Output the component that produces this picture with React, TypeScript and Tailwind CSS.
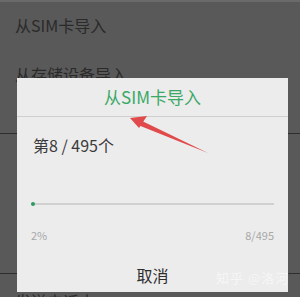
import React from "react";

export default function App() {
  const font = { fontFamily: '"Noto Sans CJK SC", "Noto Sans", Roboto, sans-serif' };
  return (
    <div className="relative w-[300px] h-[297px] overflow-hidden bg-[#595959]" style={font}>
      <div className="h-[2px] bg-[#6a6a6a]" />
      {/* background list */}
      <div className="flex flex-col text-[#2a2a2a]">
        <div className="h-[46px] flex items-center pl-[15px] text-[16px]">从SIM卡导入</div>
        <div className="h-[52px] flex items-center pl-[15px] text-[16px]">从存储设备导入</div>
        <div className="h-[33px]" />
        <div className="h-px bg-[#2e2e2e]" />
        <div className="h-[139px]" />
        <div className="h-px bg-[#2e2e2e]" />
        <div className="pt-[17px] pl-[15px] text-[16px] leading-[20px]">发送电话本</div>
      </div>

      {/* dialog */}
      <div className="absolute left-[17px] top-[78px] w-[271px] h-[214px] bg-[#ececec] flex flex-col">
        <div className="h-[38px] flex items-center justify-center text-[17px] text-[#3aa866]">从SIM卡导入</div>
        <div className="h-px bg-[#cfcfcf]" />
        <div className="pl-[16px] pt-[18px] text-[16px] text-[#3a3a3a] leading-[20px]">第8 / 495个</div>
        <div className="mx-[14px] mt-[48px] relative h-[2px] bg-[#d0d0d0]">
          <div className="absolute left-0 top-[-1px] w-[4px] h-[4px] rounded-full bg-[#2e9a60]" />
        </div>
        <div className="mx-[14px] mt-[23px] flex justify-between text-[11px] leading-[14px] text-[#a8a8a8]">
          <span>2%</span>
          <span>8/495</span>
        </div>
        <div className="mt-[23px] flex justify-center text-[16px] leading-[20px] text-[#2e2e2e]">取消</div>
      </div>

      {/* watermark */}
      <div className="absolute left-[216px] top-[268px] text-[13px] text-[#f6f6f6] tracking-[1px]">知乎 @洛河</div>

      {/* red arrow */}
      <svg className="absolute left-0 top-0" width="300" height="297" viewBox="0 0 300 297">
        <polygon points="208,153 140,120 138,125" fill="#e04a4a" />
        <polygon points="130,118 147,116 139,128" fill="#e04a4a" />
      </svg>
    </div>
  );
}
